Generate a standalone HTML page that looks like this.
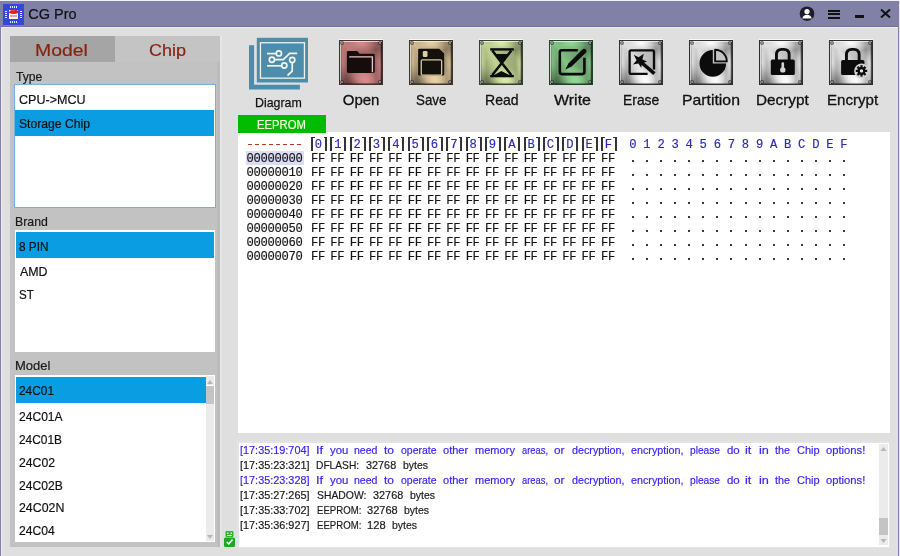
<!DOCTYPE html>
<html><head><meta charset="utf-8"><style>
html,body{margin:0;padding:0;}
body{width:900px;height:556px;position:relative;overflow:hidden;background:#e1e1e1;font-family:"Liberation Sans",sans-serif;}
.t{position:absolute;white-space:pre;line-height:1;transform-origin:0 0;}
.r{position:absolute;}
.btn{position:absolute;top:40px;width:42px;height:43px;border:1px solid #333;box-sizing:content-box;box-shadow:0 -1px 0 #f8f8f8;overflow:hidden;}
.plate{position:absolute;left:0;top:0;right:0;bottom:0;background:
 radial-gradient(ellipse 55% 20% at 50% 5%, rgba(255,255,255,1) 0%, rgba(255,255,255,0) 100%),
 radial-gradient(ellipse 38% 30% at 60% 90%, rgba(255,255,255,0.95) 0%, rgba(255,255,255,0) 100%),
 linear-gradient(60deg, rgba(255,255,255,0) 25%, rgba(255,255,255,0.55) 42%, rgba(255,255,255,0) 58%),
 radial-gradient(ellipse 75% 75% at 50% 50%, rgba(0,0,0,0) 50%, rgba(0,0,0,0.35) 100%),
 linear-gradient(45deg, rgba(0,0,0,0.3) 0%, rgba(0,0,0,0) 28%, rgba(0,0,0,0) 72%, rgba(0,0,0,0.35) 100%),
 linear-gradient(90deg, #747474 0%, #eeeeee 5%, #b4b4b4 15%, #c4c4c4 50%, #b4b4b4 85%, #eeeeee 95%, #6e6e6e 100%);}
.tint{position:absolute;left:0;top:0;right:0;bottom:0;mix-blend-mode:multiply;}
.bev{position:absolute;left:0;top:0;right:0;bottom:0;box-shadow:inset 1px 1px 0 rgba(255,255,255,0.7), inset -1px -1px 0 rgba(0,0,0,0.35);}
.scr{position:absolute;width:2px;height:2px;border-radius:50%;background:#9a9a9a;box-shadow:0 0 0 1px rgba(30,30,30,0.6);}
.ico{position:absolute;left:-1px;top:-1px;}
.br{position:absolute;top:137px;width:4px;height:14px;border-left:2px solid #333;border-top:1.5px solid #333;box-sizing:border-box;}
.br2{position:absolute;top:137px;width:3.5px;height:14px;border-right:2px solid #333;border-top:1.5px solid #333;box-sizing:border-box;}
</style></head><body>
<div class="r" style="left:0px;top:0px;width:900px;height:556px;background:#dfdfdf;"></div>
<div class="r" style="left:0px;top:0px;width:900px;height:1px;background:#f2f2f2;"></div>
<div class="r" style="left:0px;top:1px;width:899px;height:25px;background:#8180a6;"></div>
<div class="r" style="left:1px;top:26px;width:897px;height:1px;background:#7370a0;"></div>
<div class="r" style="left:1px;top:27px;width:897px;height:1px;background:#ececec;"></div>
<div class="r" style="left:1px;top:27px;width:1px;height:529px;background:#ececec;"></div>
<div class="r" style="left:0px;top:26px;width:1px;height:530px;background:#8180a6;"></div>
<div class="r" style="left:898px;top:26px;width:1px;height:530px;background:#8180a6;"></div>
<div class="r" style="left:899px;top:0px;width:1px;height:556px;background:#e6e6e6;"></div>
<svg class="r" style="left:3px;top:4px" width="21" height="21" viewBox="0 0 21 21">
<rect x="0" y="0" width="21" height="21" fill="#3547d8"/>
<g fill="#e8ecff">
<rect x="9" y="2" width="1" height="2"/><rect x="11" y="2" width="1" height="2"/><rect x="13" y="2" width="1" height="2"/><rect x="7" y="2" width="1" height="2"/>
<rect x="7" y="17" width="1" height="2"/><rect x="9" y="17" width="1" height="2"/><rect x="11" y="17" width="1" height="2"/><rect x="13" y="17" width="1" height="2"/>
<rect x="2" y="7" width="2" height="1"/><rect x="2" y="9" width="2" height="1"/><rect x="2" y="11" width="2" height="1"/><rect x="2" y="13" width="2" height="1"/>
<rect x="17" y="7" width="2" height="1"/><rect x="17" y="9" width="2" height="1"/><rect x="17" y="11" width="2" height="1"/><rect x="17" y="13" width="2" height="1"/>
</g>
<rect x="6" y="6" width="9" height="9" fill="#f4f0f4"/>
<path d="M6 8 Q8 5 11 6.5 Q13 5 15 7 L15 9 Q11 11 6 9 Z" fill="#e02020"/>
<rect x="7" y="11" width="7" height="2" fill="#e8a0b0"/>
</svg>
<div class="t" style="left:28.28px;top:7.00px;font-size:14.50px;color:#111;font-family:'Liberation Sans', sans-serif;-webkit-text-stroke:0.20px #111;">CG Pro</div>
<svg class="r" style="left:799px;top:6px" width="16" height="16" viewBox="0 0 16 16">
<circle cx="8" cy="7.7" r="7.3" fill="#1c1c2c"/>
<circle cx="8" cy="5.6" r="2.6" fill="#fff"/>
<path d="M3.3 12.4 Q4.2 8.8 8 8.8 Q11.8 8.8 12.7 12.4 Z" fill="#fff"/>
</svg>
<div class="r" style="left:828px;top:10px;width:12px;height:2px;background:#111;"></div>
<div class="r" style="left:828px;top:13px;width:12px;height:2px;background:#111;"></div>
<div class="r" style="left:828px;top:17px;width:12px;height:2px;background:#111;"></div>
<div class="r" style="left:855px;top:15px;width:9px;height:3px;background:#111;"></div>
<svg class="r" style="left:880px;top:9px" width="11" height="9" viewBox="0 0 11 9">
<path d="M1 0.5 L10 8.5 M10 0.5 L1 8.5" stroke="#111" stroke-width="2"/>
</svg>
<div class="r" style="left:10px;top:36px;width:210px;height:511px;background:#c2c2c2;"></div>
<div class="r" style="left:217px;top:62px;width:3px;height:485px;background:#bcbcbc;"></div>
<div class="r" style="left:220px;top:36px;width:2px;height:511px;background:#e6e6e6;"></div>
<div class="r" style="left:10px;top:36px;width:105px;height:26px;background:#a5a5a5;"></div>
<div class="r" style="left:115px;top:36px;width:105px;height:26px;background:#c4c4c4;"></div>
<div class="t" style="left:35.45px;top:42.00px;font-size:17.40px;color:#8a2212;font-family:'Liberation Sans', sans-serif;transform:scaleX(1.1159);-webkit-text-stroke:0.20px #8a2212;">Model</div>
<div class="t" style="left:148.60px;top:42.00px;font-size:17.40px;color:#8a2212;font-family:'Liberation Sans', sans-serif;transform:scaleX(1.0383);-webkit-text-stroke:0.20px #8a2212;">Chip</div>
<div class="t" style="left:16.06px;top:71.00px;font-size:12.80px;color:#1a1a1a;font-family:'Liberation Sans', sans-serif;transform:scaleX(0.9487);-webkit-text-stroke:0.20px #1a1a1a;">Type</div>
<div class="r" style="left:14px;top:84px;width:202px;height:124px;background:#72aee8;"></div>
<div class="r" style="left:15px;top:85px;width:200px;height:122px;background:#fff;"></div>
<div class="r" style="left:15px;top:110px;width:199px;height:26px;background:#0a9de2;"></div>
<div class="t" style="left:18.87px;top:94.00px;font-size:12.80px;color:#111;font-family:'Liberation Sans', sans-serif;transform:scaleX(0.9803);-webkit-text-stroke:0.20px #111;">CPU-&gt;MCU</div>
<div class="t" style="left:18.95px;top:118.00px;font-size:12.80px;color:#111;font-family:'Liberation Sans', sans-serif;transform:scaleX(0.9511);-webkit-text-stroke:0.20px #111;">Storage Chip</div>
<div class="t" style="left:15.32px;top:216.00px;font-size:12.80px;color:#1a1a1a;font-family:'Liberation Sans', sans-serif;transform:scaleX(0.9611);-webkit-text-stroke:0.20px #1a1a1a;">Brand</div>
<div class="r" style="left:15px;top:230px;width:200px;height:122px;background:#ffffff;"></div>
<div class="r" style="left:16px;top:232px;width:198px;height:26px;background:#0a9de2;"></div>
<div class="t" style="left:19.07px;top:241.00px;font-size:12.80px;color:#111;font-family:'Liberation Sans', sans-serif;transform:scaleX(0.9211);-webkit-text-stroke:0.20px #111;">8 PIN</div>
<div class="t" style="left:19.60px;top:266.00px;font-size:12.80px;color:#111;font-family:'Liberation Sans', sans-serif;transform:scaleX(0.9698);-webkit-text-stroke:0.20px #111;">AMD</div>
<div class="t" style="left:19.08px;top:289.00px;font-size:12.80px;color:#111;font-family:'Liberation Sans', sans-serif;transform:scaleX(0.9039);-webkit-text-stroke:0.20px #111;">ST</div>
<div class="t" style="left:15.46px;top:360.00px;font-size:12.80px;color:#1a1a1a;font-family:'Liberation Sans', sans-serif;transform:scaleX(1.0164);-webkit-text-stroke:0.20px #1a1a1a;">Model</div>
<div class="r" style="left:15px;top:375px;width:200px;height:167px;background:#ffffff;"></div>
<div class="r" style="left:16px;top:377px;width:190px;height:26px;background:#0a9de2;"></div>
<div class="r" style="left:206px;top:376px;width:8px;height:165px;background:#ebebeb;"></div>
<div class="r" style="left:206px;top:386px;width:8px;height:18px;background:#c4c4c4;"></div>
<div class="r" style="left:206px;top:385px;width:8px;height:1px;background:#ffffff;"></div>
<div class="t" style="left:19.11px;top:384.00px;font-size:13.00px;color:#111;font-family:'Liberation Sans', sans-serif;transform:scaleX(0.9150);-webkit-text-stroke:0.20px #111;">24C01</div>
<div class="t" style="left:19.10px;top:410.00px;font-size:13.00px;color:#111;font-family:'Liberation Sans', sans-serif;transform:scaleX(0.9291);-webkit-text-stroke:0.20px #111;">24C01A</div>
<div class="t" style="left:19.11px;top:433.00px;font-size:13.00px;color:#111;font-family:'Liberation Sans', sans-serif;transform:scaleX(0.9139);-webkit-text-stroke:0.20px #111;">24C01B</div>
<div class="t" style="left:19.09px;top:456.00px;font-size:13.00px;color:#111;font-family:'Liberation Sans', sans-serif;transform:scaleX(0.9409);-webkit-text-stroke:0.20px #111;">24C02</div>
<div class="t" style="left:19.09px;top:479.00px;font-size:13.00px;color:#111;font-family:'Liberation Sans', sans-serif;transform:scaleX(0.9314);-webkit-text-stroke:0.20px #111;">24C02B</div>
<div class="t" style="left:19.08px;top:501.00px;font-size:13.00px;color:#111;font-family:'Liberation Sans', sans-serif;transform:scaleX(0.9509);-webkit-text-stroke:0.20px #111;">24C02N</div>
<div class="t" style="left:19.09px;top:524.00px;font-size:13.00px;color:#111;font-family:'Liberation Sans', sans-serif;transform:scaleX(0.9344);-webkit-text-stroke:0.20px #111;">24C04</div>
<svg class="r" style="left:206px;top:377px" width="8" height="9"><path d="M1 7 L4 3 L7 7 Z" fill="#b6b6b6"/></svg>
<svg class="r" style="left:206px;top:532px" width="8" height="9"><path d="M1 3 L4 7 L7 3 Z" fill="#b6b6b6"/></svg>
<svg class="r" style="left:224px;top:531px" width="11" height="16" viewBox="0 0 11 16">
<rect x="1.5" y="0" width="8" height="6" rx="1" fill="#2db52d"/>
<rect x="3" y="1.5" width="1.5" height="1.5" fill="#dff5df"/><rect x="6.5" y="1.5" width="1.5" height="1.5" fill="#dff5df"/>
<rect x="3" y="4" width="5" height="1" fill="#dff5df"/>
<rect x="0" y="6.5" width="11" height="9.5" rx="1.5" fill="#1ea81e"/>
<path d="M2.8 11 L4.8 13 L8.5 8.5" stroke="#fff" stroke-width="1.5" fill="none"/>
</svg>
<svg class="r" style="left:246px;top:34px" width="66" height="60" viewBox="0 0 66 60">
<path d="M3 11.3 L8.1 11.3 L8.1 50.7 L53.9 50.7 L53.9 55.6 L3 55.6 Z" fill="#4d8dac"/>
<rect x="10.8" y="3.8" width="51.2" height="44.7" fill="#4d8dac"/>
<rect x="14.45" y="8.75" width="44" height="35.4" fill="none" stroke="#eef2ee" stroke-width="1.3"/>
<g stroke="#f2f4ee" stroke-width="1.7" fill="none">
<path d="M21 19.6 L30.2 19.6"/><circle cx="32.9" cy="19.4" r="2.6"/>
<circle cx="25.9" cy="25.7" r="2.6"/><path d="M28.5 25.7 L37.2 25.7 L43.7 19.4 L51.2 19.4"/>
<path d="M21 31.8 L35.6 31.8"/><circle cx="38.3" cy="31.5" r="2.6"/>
<circle cx="46.2" cy="25.9" r="2.6"/><path d="M46.2 28.5 L46.2 37.2 L41.5 41.5"/>
</g>
</svg>
<div class="t" style="left:255.01px;top:96.00px;font-size:13.50px;color:#111;font-family:'Liberation Sans', sans-serif;transform:scaleX(0.9170);-webkit-text-stroke:0.25px #111;">Diagram</div>
<div class="btn" style="left:339px;border-color:#4a2c2c">
<div class="plate"></div>
<div class="tint" style="background:#dc8c8c"></div>
<div class="bev" style="border-color:#4a2c2c"></div>
<div class="scr" style="left:1.0px;top:1.2px"></div>
<div class="scr" style="left:38.6px;top:1.2px"></div>
<div class="scr" style="left:1.0px;top:39.5px"></div>
<div class="scr" style="left:38.6px;top:39.5px"></div>
<svg class="ico" width="44" height="45" viewBox="0 0 44 45"><path d="M9.2 10.9 L17.6 10.9 Q18.3 10.9 18.8 11.5 L20.6 13.8 L34.4 13.8 Q35.8 13.8 35.8 15.2 L35.8 31.6 Q35.8 33 34.4 33 L9.3 33 Q7.9 33 7.9 31.6 L7.9 12.2 Q7.9 10.9 9.2 10.9 Z" fill="#160c0c"/><path d="M10.2 16.9 L33.4 16.9 L33.4 32.3" stroke="#e4c4c4" stroke-width="1.4" fill="none"/></svg>
</div>
<div class="t" style="left:342.73px;top:92.00px;font-size:15.00px;color:#111;font-family:'Liberation Sans', sans-serif;-webkit-text-stroke:0.3px #111;">Open</div>
<div class="btn" style="left:409px;border-color:#3e3422">
<div class="plate"></div>
<div class="tint" style="background:#ecd4a6"></div>
<div class="bev" style="border-color:#3e3422"></div>
<div class="scr" style="left:1.0px;top:1.2px"></div>
<div class="scr" style="left:38.6px;top:1.2px"></div>
<div class="scr" style="left:1.0px;top:39.5px"></div>
<div class="scr" style="left:38.6px;top:39.5px"></div>
<svg class="ico" width="44" height="45" viewBox="0 0 44 45"><path d="M10.3 8.8 L30.2 8.8 L35.2 13.4 L35.2 34.3 Q35.2 35.5 34 35.5 L10.3 35.5 Q9.1 35.5 9.1 34.3 L9.1 10 Q9.1 8.8 10.3 8.8 Z" fill="#14100a"/><rect x="13.8" y="11" width="4.7" height="6" rx="1.2" fill="#dccca8"/><rect x="12.25" y="19.85" width="20.4" height="15.2" rx="1" fill="none" stroke="#d8c8a4" stroke-width="1.3"/></svg>
</div>
<div class="t" style="left:416.20px;top:92.00px;font-size:15.00px;color:#111;font-family:'Liberation Sans', sans-serif;transform:scaleX(0.8919);-webkit-text-stroke:0.3px #111;">Save</div>
<div class="btn" style="left:479px;border-color:#36402c">
<div class="plate"></div>
<div class="tint" style="background:#dcf0a8"></div>
<div class="bev" style="border-color:#36402c"></div>
<div class="scr" style="left:1.0px;top:1.2px"></div>
<div class="scr" style="left:38.6px;top:1.2px"></div>
<div class="scr" style="left:1.0px;top:39.5px"></div>
<div class="scr" style="left:38.6px;top:39.5px"></div>
<svg class="ico" width="44" height="45" viewBox="0 0 44 45"><rect x="11.2" y="8.2" width="23.6" height="2.4" fill="#0c0c0c"/><rect x="11.2" y="34.9" width="23.6" height="2.4" fill="#0c0c0c"/><path d="M13.3 10.5 L22.8 23 L13.3 35 M32.3 10.5 L22.8 23 L32.3 35" stroke="#0c0c0c" stroke-width="2.5" fill="none"/><path d="M16.2 14.1 L29.4 14.1 L22.8 23 Z" fill="#0c0c0c"/><path d="M15.3 35.1 L22.3 31 L30.3 35.1 Z" fill="#0c0c0c"/></svg>
</div>
<div class="t" style="left:484.58px;top:92.00px;font-size:15.00px;color:#111;font-family:'Liberation Sans', sans-serif;transform:scaleX(0.9354);-webkit-text-stroke:0.3px #111;">Read</div>
<div class="btn" style="left:549px;border-color:#1e4424">
<div class="plate"></div>
<div class="tint" style="background:#94dc96"></div>
<div class="bev" style="border-color:#1e4424"></div>
<div class="scr" style="left:1.0px;top:1.2px"></div>
<div class="scr" style="left:38.6px;top:1.2px"></div>
<div class="scr" style="left:1.0px;top:39.5px"></div>
<div class="scr" style="left:38.6px;top:39.5px"></div>
<svg class="ico" width="44" height="45" viewBox="0 0 44 45"><path d="M28.8 10.2 L12.8 10.2 Q10.8 10.2 10.8 12.2 L10.8 32.1 Q10.8 34.1 12.8 34.1 L33.4 34.1 Q35.4 34.1 35.4 32.1 L35.4 17.8" stroke="#0c0c0c" stroke-width="2.6" fill="none"/><path d="M16.3 29.6 L19.4 23.4 L33.4 9.4 Q35.1 7.9 36.8 9.5 Q38.3 11.1 36.8 12.8 L22.6 26.6 Z" fill="#0c0c0c"/></svg>
</div>
<div class="t" style="left:553.72px;top:92.00px;font-size:15.00px;color:#111;font-family:'Liberation Sans', sans-serif;transform:scaleX(1.0655);-webkit-text-stroke:0.3px #111;">Write</div>
<div class="btn" style="left:619px;border-color:#2e2e2e">
<div class="plate"></div>
<div class="bev" style="border-color:#2e2e2e"></div>
<div class="scr" style="left:1.0px;top:1.2px"></div>
<div class="scr" style="left:38.6px;top:1.2px"></div>
<div class="scr" style="left:1.0px;top:39.5px"></div>
<div class="scr" style="left:38.6px;top:39.5px"></div>
<svg class="ico" width="44" height="45" viewBox="0 0 44 45"><path d="M28.6 33.9 L12 33.9 Q10.6 33.9 10.6 32.5 L10.6 11.7 Q10.6 10.3 12 10.3 L33.6 10.3 Q35 10.3 35 11.7 L35 29.6" stroke="#0c0c0c" stroke-width="2.3" fill="none"/><path d="M23 23 L35.4 33.6" stroke="#0c0c0c" stroke-width="3.6"/><path d="M14.7 14.7 L19.6 17.3 L24.8 13.7 L23.4 19.6 L28 21.5 L23 23.4 L22.2 27.7 L19.4 23.4 L14 24.4 L17.6 20.2 Z" fill="#0c0c0c"/></svg>
</div>
<div class="t" style="left:623.29px;top:92.00px;font-size:15.00px;color:#111;font-family:'Liberation Sans', sans-serif;transform:scaleX(0.9256);-webkit-text-stroke:0.3px #111;">Erase</div>
<div class="btn" style="left:689px;border-color:#2e2e2e">
<div class="plate"></div>
<div class="bev" style="border-color:#2e2e2e"></div>
<div class="scr" style="left:1.0px;top:1.2px"></div>
<div class="scr" style="left:38.6px;top:1.2px"></div>
<div class="scr" style="left:1.0px;top:39.5px"></div>
<div class="scr" style="left:38.6px;top:39.5px"></div>
<svg class="ico" width="44" height="45" viewBox="0 0 44 45"><path d="M23.8 23.4 L23.8 10.1 A13.3 13.3 0 1 0 37.1 23.4 Z" fill="#0c0c0c"/><path d="M26.1 21.4 L26.1 9.7 A11.7 11.7 0 0 1 37.8 21.4 Z" fill="#c4c4c4" stroke="#0c0c0c" stroke-width="1.9" stroke-linejoin="round"/></svg>
</div>
<div class="t" style="left:682.04px;top:92.00px;font-size:15.00px;color:#111;font-family:'Liberation Sans', sans-serif;transform:scaleX(1.0530);-webkit-text-stroke:0.3px #111;">Partition</div>
<div class="btn" style="left:759px;border-color:#2e2e2e">
<div class="plate"></div>
<div class="bev" style="border-color:#2e2e2e"></div>
<div class="scr" style="left:1.0px;top:1.2px"></div>
<div class="scr" style="left:38.6px;top:1.2px"></div>
<div class="scr" style="left:1.0px;top:39.5px"></div>
<div class="scr" style="left:38.6px;top:39.5px"></div>
<svg class="ico" width="44" height="45" viewBox="0 0 44 45"><path d="M17.45 20.5 L17.45 14.6 Q17.45 9.35 22.7 9.35 L24.9 9.35 Q30.15 9.35 30.15 14.6 L30.15 20.5" stroke="#0c0c0c" stroke-width="2.9" fill="none"/><rect x="11.8" y="19.6" width="24" height="15.5" rx="1.6" fill="#0c0c0c"/><rect x="22.5" y="22.2" width="2.6" height="7.5" rx="1.2" fill="#d4d4d4"/><circle cx="23.8" cy="29.9" r="2.7" fill="#d4d4d4"/></svg>
</div>
<div class="t" style="left:755.67px;top:92.00px;font-size:15.00px;color:#111;font-family:'Liberation Sans', sans-serif;transform:scaleX(1.0218);-webkit-text-stroke:0.3px #111;">Decrypt</div>
<div class="btn" style="left:829px;border-color:#2e2e2e">
<div class="plate"></div>
<div class="bev" style="border-color:#2e2e2e"></div>
<div class="scr" style="left:1.0px;top:1.2px"></div>
<div class="scr" style="left:38.6px;top:1.2px"></div>
<div class="scr" style="left:1.0px;top:39.5px"></div>
<div class="scr" style="left:38.6px;top:39.5px"></div>
<svg class="ico" width="44" height="45" viewBox="0 0 44 45"><path d="M17.45 20.5 L17.45 14.6 Q17.45 9.35 22.7 9.35 L24.9 9.35 Q30.15 9.35 30.15 14.6 L30.15 20.5" stroke="#0c0c0c" stroke-width="2.9" fill="none"/><rect x="12.1" y="19.9" width="23.3" height="15.2" rx="1.6" fill="#0c0c0c"/><circle cx="32.5" cy="30.9" r="7.4" fill="#d2d2d2"/><g transform="translate(32.5 30.9)" fill="#0c0c0c"><circle r="3.9"/><rect x="-1.1" y="-5.7" width="2.2" height="11.4"/><rect x="-5.7" y="-1.1" width="11.4" height="2.2"/><rect x="-1.1" y="-5.7" width="2.2" height="11.4" transform="rotate(45)"/><rect x="-1.1" y="-5.7" width="2.2" height="11.4" transform="rotate(-45)"/><circle r="1.7" fill="#e4e4e4"/></g></svg>
</div>
<div class="t" style="left:826.79px;top:92.00px;font-size:15.00px;color:#111;font-family:'Liberation Sans', sans-serif;transform:scaleX(1.0061);-webkit-text-stroke:0.3px #111;">Encrypt</div>
<div class="r" style="left:238px;top:132px;width:652px;height:301px;background:#ffffff;"></div>
<div class="r" style="left:238px;top:115px;width:88px;height:18px;background:#00bb00;"></div>
<div class="t" style="left:257.10px;top:119.00px;font-size:12.50px;color:#f4ffe0;font-family:'Liberation Sans', sans-serif;transform:scaleX(0.9017);-webkit-text-stroke:0.20px #f4ffe0;">EEPROM</div>
<div class="r" style="left:248.20px;top:144px;width:3.6px;height:1.3px;background:#b03a2a"></div>
<div class="r" style="left:255.23px;top:144px;width:3.6px;height:1.3px;background:#b03a2a"></div>
<div class="r" style="left:262.26px;top:144px;width:3.6px;height:1.3px;background:#b03a2a"></div>
<div class="r" style="left:269.29px;top:144px;width:3.6px;height:1.3px;background:#b03a2a"></div>
<div class="r" style="left:276.32px;top:144px;width:3.6px;height:1.3px;background:#b03a2a"></div>
<div class="r" style="left:283.35px;top:144px;width:3.6px;height:1.3px;background:#b03a2a"></div>
<div class="r" style="left:290.38px;top:144px;width:3.6px;height:1.3px;background:#b03a2a"></div>
<div class="r" style="left:297.41px;top:144px;width:3.6px;height:1.3px;background:#b03a2a"></div>
<div class="br" style="left:311.00px"></div>
<div class="br2" style="left:323.50px"></div>
<div class="t" style="left:314.85px;top:139px;font-size:12.2px;font-family:'Liberation Mono', monospace;letter-spacing:-0.32px;color:#2a2ab4;-webkit-text-stroke:0.15px currentColor;">0</div>
<div class="br" style="left:330.33px"></div>
<div class="br2" style="left:342.83px"></div>
<div class="t" style="left:334.18px;top:139px;font-size:12.2px;font-family:'Liberation Mono', monospace;letter-spacing:-0.32px;color:#2a2ab4;-webkit-text-stroke:0.15px currentColor;">1</div>
<div class="br" style="left:349.66px"></div>
<div class="br2" style="left:362.16px"></div>
<div class="t" style="left:353.51px;top:139px;font-size:12.2px;font-family:'Liberation Mono', monospace;letter-spacing:-0.32px;color:#2a2ab4;-webkit-text-stroke:0.15px currentColor;">2</div>
<div class="br" style="left:368.99px"></div>
<div class="br2" style="left:381.49px"></div>
<div class="t" style="left:372.84px;top:139px;font-size:12.2px;font-family:'Liberation Mono', monospace;letter-spacing:-0.32px;color:#2a2ab4;-webkit-text-stroke:0.15px currentColor;">3</div>
<div class="br" style="left:388.32px"></div>
<div class="br2" style="left:400.82px"></div>
<div class="t" style="left:392.17px;top:139px;font-size:12.2px;font-family:'Liberation Mono', monospace;letter-spacing:-0.32px;color:#2a2ab4;-webkit-text-stroke:0.15px currentColor;">4</div>
<div class="br" style="left:407.65px"></div>
<div class="br2" style="left:420.15px"></div>
<div class="t" style="left:411.50px;top:139px;font-size:12.2px;font-family:'Liberation Mono', monospace;letter-spacing:-0.32px;color:#2a2ab4;-webkit-text-stroke:0.15px currentColor;">5</div>
<div class="br" style="left:426.98px"></div>
<div class="br2" style="left:439.48px"></div>
<div class="t" style="left:430.83px;top:139px;font-size:12.2px;font-family:'Liberation Mono', monospace;letter-spacing:-0.32px;color:#2a2ab4;-webkit-text-stroke:0.15px currentColor;">6</div>
<div class="br" style="left:446.31px"></div>
<div class="br2" style="left:458.81px"></div>
<div class="t" style="left:450.16px;top:139px;font-size:12.2px;font-family:'Liberation Mono', monospace;letter-spacing:-0.32px;color:#2a2ab4;-webkit-text-stroke:0.15px currentColor;">7</div>
<div class="br" style="left:465.64px"></div>
<div class="br2" style="left:478.14px"></div>
<div class="t" style="left:469.49px;top:139px;font-size:12.2px;font-family:'Liberation Mono', monospace;letter-spacing:-0.32px;color:#2a2ab4;-webkit-text-stroke:0.15px currentColor;">8</div>
<div class="br" style="left:484.97px"></div>
<div class="br2" style="left:497.47px"></div>
<div class="t" style="left:488.82px;top:139px;font-size:12.2px;font-family:'Liberation Mono', monospace;letter-spacing:-0.32px;color:#2a2ab4;-webkit-text-stroke:0.15px currentColor;">9</div>
<div class="br" style="left:504.30px"></div>
<div class="br2" style="left:516.80px"></div>
<div class="t" style="left:508.15px;top:139px;font-size:12.2px;font-family:'Liberation Mono', monospace;letter-spacing:-0.32px;color:#2a2ab4;-webkit-text-stroke:0.15px currentColor;">A</div>
<div class="br" style="left:523.63px"></div>
<div class="br2" style="left:536.13px"></div>
<div class="t" style="left:527.48px;top:139px;font-size:12.2px;font-family:'Liberation Mono', monospace;letter-spacing:-0.32px;color:#2a2ab4;-webkit-text-stroke:0.15px currentColor;">B</div>
<div class="br" style="left:542.96px"></div>
<div class="br2" style="left:555.46px"></div>
<div class="t" style="left:546.81px;top:139px;font-size:12.2px;font-family:'Liberation Mono', monospace;letter-spacing:-0.32px;color:#2a2ab4;-webkit-text-stroke:0.15px currentColor;">C</div>
<div class="br" style="left:562.29px"></div>
<div class="br2" style="left:574.79px"></div>
<div class="t" style="left:566.14px;top:139px;font-size:12.2px;font-family:'Liberation Mono', monospace;letter-spacing:-0.32px;color:#2a2ab4;-webkit-text-stroke:0.15px currentColor;">D</div>
<div class="br" style="left:581.62px"></div>
<div class="br2" style="left:594.12px"></div>
<div class="t" style="left:585.47px;top:139px;font-size:12.2px;font-family:'Liberation Mono', monospace;letter-spacing:-0.32px;color:#2a2ab4;-webkit-text-stroke:0.15px currentColor;">E</div>
<div class="br" style="left:600.95px"></div>
<div class="br2" style="left:613.45px"></div>
<div class="t" style="left:604.80px;top:139px;font-size:12.2px;font-family:'Liberation Mono', monospace;letter-spacing:-0.32px;color:#2a2ab4;-webkit-text-stroke:0.15px currentColor;">F</div>
<div class="r" style="left:246px;top:151px;width:58px;height:14px;background:#dcdcf7;"></div>
<div class="t" style="left:246.55px;top:153px;font-size:12.2px;font-family:'Liberation Mono', monospace;letter-spacing:-0.32px;color:#141414;-webkit-text-stroke:0.15px currentColor;">00000000</div>
<div class="t" style="left:311.00px;top:153px;font-size:12.2px;font-family:'Liberation Mono', monospace;letter-spacing:-0.32px;color:#141414;-webkit-text-stroke:0.15px currentColor;">FF</div>
<div class="t" style="left:330.33px;top:153px;font-size:12.2px;font-family:'Liberation Mono', monospace;letter-spacing:-0.32px;color:#141414;-webkit-text-stroke:0.15px currentColor;">FF</div>
<div class="t" style="left:349.66px;top:153px;font-size:12.2px;font-family:'Liberation Mono', monospace;letter-spacing:-0.32px;color:#141414;-webkit-text-stroke:0.15px currentColor;">FF</div>
<div class="t" style="left:368.99px;top:153px;font-size:12.2px;font-family:'Liberation Mono', monospace;letter-spacing:-0.32px;color:#141414;-webkit-text-stroke:0.15px currentColor;">FF</div>
<div class="t" style="left:388.32px;top:153px;font-size:12.2px;font-family:'Liberation Mono', monospace;letter-spacing:-0.32px;color:#141414;-webkit-text-stroke:0.15px currentColor;">FF</div>
<div class="t" style="left:407.65px;top:153px;font-size:12.2px;font-family:'Liberation Mono', monospace;letter-spacing:-0.32px;color:#141414;-webkit-text-stroke:0.15px currentColor;">FF</div>
<div class="t" style="left:426.98px;top:153px;font-size:12.2px;font-family:'Liberation Mono', monospace;letter-spacing:-0.32px;color:#141414;-webkit-text-stroke:0.15px currentColor;">FF</div>
<div class="t" style="left:446.31px;top:153px;font-size:12.2px;font-family:'Liberation Mono', monospace;letter-spacing:-0.32px;color:#141414;-webkit-text-stroke:0.15px currentColor;">FF</div>
<div class="t" style="left:465.64px;top:153px;font-size:12.2px;font-family:'Liberation Mono', monospace;letter-spacing:-0.32px;color:#141414;-webkit-text-stroke:0.15px currentColor;">FF</div>
<div class="t" style="left:484.97px;top:153px;font-size:12.2px;font-family:'Liberation Mono', monospace;letter-spacing:-0.32px;color:#141414;-webkit-text-stroke:0.15px currentColor;">FF</div>
<div class="t" style="left:504.30px;top:153px;font-size:12.2px;font-family:'Liberation Mono', monospace;letter-spacing:-0.32px;color:#141414;-webkit-text-stroke:0.15px currentColor;">FF</div>
<div class="t" style="left:523.63px;top:153px;font-size:12.2px;font-family:'Liberation Mono', monospace;letter-spacing:-0.32px;color:#141414;-webkit-text-stroke:0.15px currentColor;">FF</div>
<div class="t" style="left:542.96px;top:153px;font-size:12.2px;font-family:'Liberation Mono', monospace;letter-spacing:-0.32px;color:#141414;-webkit-text-stroke:0.15px currentColor;">FF</div>
<div class="t" style="left:562.29px;top:153px;font-size:12.2px;font-family:'Liberation Mono', monospace;letter-spacing:-0.32px;color:#141414;-webkit-text-stroke:0.15px currentColor;">FF</div>
<div class="t" style="left:581.62px;top:153px;font-size:12.2px;font-family:'Liberation Mono', monospace;letter-spacing:-0.32px;color:#141414;-webkit-text-stroke:0.15px currentColor;">FF</div>
<div class="t" style="left:600.95px;top:153px;font-size:12.2px;font-family:'Liberation Mono', monospace;letter-spacing:-0.32px;color:#141414;-webkit-text-stroke:0.15px currentColor;">FF</div>
<div class="r" style="left:632px;top:160px;width:2px;height:2px;background:#3a3a3a;"></div>
<div class="r" style="left:646px;top:160px;width:2px;height:2px;background:#3a3a3a;"></div>
<div class="r" style="left:660px;top:160px;width:2px;height:2px;background:#3a3a3a;"></div>
<div class="r" style="left:674px;top:160px;width:2px;height:2px;background:#3a3a3a;"></div>
<div class="r" style="left:688px;top:160px;width:2px;height:2px;background:#3a3a3a;"></div>
<div class="r" style="left:702px;top:160px;width:2px;height:2px;background:#3a3a3a;"></div>
<div class="r" style="left:716px;top:160px;width:2px;height:2px;background:#3a3a3a;"></div>
<div class="r" style="left:730px;top:160px;width:2px;height:2px;background:#3a3a3a;"></div>
<div class="r" style="left:745px;top:160px;width:2px;height:2px;background:#3a3a3a;"></div>
<div class="r" style="left:759px;top:160px;width:2px;height:2px;background:#3a3a3a;"></div>
<div class="r" style="left:773px;top:160px;width:2px;height:2px;background:#3a3a3a;"></div>
<div class="r" style="left:787px;top:160px;width:2px;height:2px;background:#3a3a3a;"></div>
<div class="r" style="left:801px;top:160px;width:2px;height:2px;background:#3a3a3a;"></div>
<div class="r" style="left:815px;top:160px;width:2px;height:2px;background:#3a3a3a;"></div>
<div class="r" style="left:829px;top:160px;width:2px;height:2px;background:#3a3a3a;"></div>
<div class="r" style="left:843px;top:160px;width:2px;height:2px;background:#3a3a3a;"></div>
<div class="t" style="left:246.55px;top:167px;font-size:12.2px;font-family:'Liberation Mono', monospace;letter-spacing:-0.32px;color:#141414;-webkit-text-stroke:0.15px currentColor;">00000010</div>
<div class="t" style="left:311.00px;top:167px;font-size:12.2px;font-family:'Liberation Mono', monospace;letter-spacing:-0.32px;color:#141414;-webkit-text-stroke:0.15px currentColor;">FF</div>
<div class="t" style="left:330.33px;top:167px;font-size:12.2px;font-family:'Liberation Mono', monospace;letter-spacing:-0.32px;color:#141414;-webkit-text-stroke:0.15px currentColor;">FF</div>
<div class="t" style="left:349.66px;top:167px;font-size:12.2px;font-family:'Liberation Mono', monospace;letter-spacing:-0.32px;color:#141414;-webkit-text-stroke:0.15px currentColor;">FF</div>
<div class="t" style="left:368.99px;top:167px;font-size:12.2px;font-family:'Liberation Mono', monospace;letter-spacing:-0.32px;color:#141414;-webkit-text-stroke:0.15px currentColor;">FF</div>
<div class="t" style="left:388.32px;top:167px;font-size:12.2px;font-family:'Liberation Mono', monospace;letter-spacing:-0.32px;color:#141414;-webkit-text-stroke:0.15px currentColor;">FF</div>
<div class="t" style="left:407.65px;top:167px;font-size:12.2px;font-family:'Liberation Mono', monospace;letter-spacing:-0.32px;color:#141414;-webkit-text-stroke:0.15px currentColor;">FF</div>
<div class="t" style="left:426.98px;top:167px;font-size:12.2px;font-family:'Liberation Mono', monospace;letter-spacing:-0.32px;color:#141414;-webkit-text-stroke:0.15px currentColor;">FF</div>
<div class="t" style="left:446.31px;top:167px;font-size:12.2px;font-family:'Liberation Mono', monospace;letter-spacing:-0.32px;color:#141414;-webkit-text-stroke:0.15px currentColor;">FF</div>
<div class="t" style="left:465.64px;top:167px;font-size:12.2px;font-family:'Liberation Mono', monospace;letter-spacing:-0.32px;color:#141414;-webkit-text-stroke:0.15px currentColor;">FF</div>
<div class="t" style="left:484.97px;top:167px;font-size:12.2px;font-family:'Liberation Mono', monospace;letter-spacing:-0.32px;color:#141414;-webkit-text-stroke:0.15px currentColor;">FF</div>
<div class="t" style="left:504.30px;top:167px;font-size:12.2px;font-family:'Liberation Mono', monospace;letter-spacing:-0.32px;color:#141414;-webkit-text-stroke:0.15px currentColor;">FF</div>
<div class="t" style="left:523.63px;top:167px;font-size:12.2px;font-family:'Liberation Mono', monospace;letter-spacing:-0.32px;color:#141414;-webkit-text-stroke:0.15px currentColor;">FF</div>
<div class="t" style="left:542.96px;top:167px;font-size:12.2px;font-family:'Liberation Mono', monospace;letter-spacing:-0.32px;color:#141414;-webkit-text-stroke:0.15px currentColor;">FF</div>
<div class="t" style="left:562.29px;top:167px;font-size:12.2px;font-family:'Liberation Mono', monospace;letter-spacing:-0.32px;color:#141414;-webkit-text-stroke:0.15px currentColor;">FF</div>
<div class="t" style="left:581.62px;top:167px;font-size:12.2px;font-family:'Liberation Mono', monospace;letter-spacing:-0.32px;color:#141414;-webkit-text-stroke:0.15px currentColor;">FF</div>
<div class="t" style="left:600.95px;top:167px;font-size:12.2px;font-family:'Liberation Mono', monospace;letter-spacing:-0.32px;color:#141414;-webkit-text-stroke:0.15px currentColor;">FF</div>
<div class="r" style="left:632px;top:174px;width:2px;height:2px;background:#3a3a3a;"></div>
<div class="r" style="left:646px;top:174px;width:2px;height:2px;background:#3a3a3a;"></div>
<div class="r" style="left:660px;top:174px;width:2px;height:2px;background:#3a3a3a;"></div>
<div class="r" style="left:674px;top:174px;width:2px;height:2px;background:#3a3a3a;"></div>
<div class="r" style="left:688px;top:174px;width:2px;height:2px;background:#3a3a3a;"></div>
<div class="r" style="left:702px;top:174px;width:2px;height:2px;background:#3a3a3a;"></div>
<div class="r" style="left:716px;top:174px;width:2px;height:2px;background:#3a3a3a;"></div>
<div class="r" style="left:730px;top:174px;width:2px;height:2px;background:#3a3a3a;"></div>
<div class="r" style="left:745px;top:174px;width:2px;height:2px;background:#3a3a3a;"></div>
<div class="r" style="left:759px;top:174px;width:2px;height:2px;background:#3a3a3a;"></div>
<div class="r" style="left:773px;top:174px;width:2px;height:2px;background:#3a3a3a;"></div>
<div class="r" style="left:787px;top:174px;width:2px;height:2px;background:#3a3a3a;"></div>
<div class="r" style="left:801px;top:174px;width:2px;height:2px;background:#3a3a3a;"></div>
<div class="r" style="left:815px;top:174px;width:2px;height:2px;background:#3a3a3a;"></div>
<div class="r" style="left:829px;top:174px;width:2px;height:2px;background:#3a3a3a;"></div>
<div class="r" style="left:843px;top:174px;width:2px;height:2px;background:#3a3a3a;"></div>
<div class="t" style="left:246.55px;top:181px;font-size:12.2px;font-family:'Liberation Mono', monospace;letter-spacing:-0.32px;color:#141414;-webkit-text-stroke:0.15px currentColor;">00000020</div>
<div class="t" style="left:311.00px;top:181px;font-size:12.2px;font-family:'Liberation Mono', monospace;letter-spacing:-0.32px;color:#141414;-webkit-text-stroke:0.15px currentColor;">FF</div>
<div class="t" style="left:330.33px;top:181px;font-size:12.2px;font-family:'Liberation Mono', monospace;letter-spacing:-0.32px;color:#141414;-webkit-text-stroke:0.15px currentColor;">FF</div>
<div class="t" style="left:349.66px;top:181px;font-size:12.2px;font-family:'Liberation Mono', monospace;letter-spacing:-0.32px;color:#141414;-webkit-text-stroke:0.15px currentColor;">FF</div>
<div class="t" style="left:368.99px;top:181px;font-size:12.2px;font-family:'Liberation Mono', monospace;letter-spacing:-0.32px;color:#141414;-webkit-text-stroke:0.15px currentColor;">FF</div>
<div class="t" style="left:388.32px;top:181px;font-size:12.2px;font-family:'Liberation Mono', monospace;letter-spacing:-0.32px;color:#141414;-webkit-text-stroke:0.15px currentColor;">FF</div>
<div class="t" style="left:407.65px;top:181px;font-size:12.2px;font-family:'Liberation Mono', monospace;letter-spacing:-0.32px;color:#141414;-webkit-text-stroke:0.15px currentColor;">FF</div>
<div class="t" style="left:426.98px;top:181px;font-size:12.2px;font-family:'Liberation Mono', monospace;letter-spacing:-0.32px;color:#141414;-webkit-text-stroke:0.15px currentColor;">FF</div>
<div class="t" style="left:446.31px;top:181px;font-size:12.2px;font-family:'Liberation Mono', monospace;letter-spacing:-0.32px;color:#141414;-webkit-text-stroke:0.15px currentColor;">FF</div>
<div class="t" style="left:465.64px;top:181px;font-size:12.2px;font-family:'Liberation Mono', monospace;letter-spacing:-0.32px;color:#141414;-webkit-text-stroke:0.15px currentColor;">FF</div>
<div class="t" style="left:484.97px;top:181px;font-size:12.2px;font-family:'Liberation Mono', monospace;letter-spacing:-0.32px;color:#141414;-webkit-text-stroke:0.15px currentColor;">FF</div>
<div class="t" style="left:504.30px;top:181px;font-size:12.2px;font-family:'Liberation Mono', monospace;letter-spacing:-0.32px;color:#141414;-webkit-text-stroke:0.15px currentColor;">FF</div>
<div class="t" style="left:523.63px;top:181px;font-size:12.2px;font-family:'Liberation Mono', monospace;letter-spacing:-0.32px;color:#141414;-webkit-text-stroke:0.15px currentColor;">FF</div>
<div class="t" style="left:542.96px;top:181px;font-size:12.2px;font-family:'Liberation Mono', monospace;letter-spacing:-0.32px;color:#141414;-webkit-text-stroke:0.15px currentColor;">FF</div>
<div class="t" style="left:562.29px;top:181px;font-size:12.2px;font-family:'Liberation Mono', monospace;letter-spacing:-0.32px;color:#141414;-webkit-text-stroke:0.15px currentColor;">FF</div>
<div class="t" style="left:581.62px;top:181px;font-size:12.2px;font-family:'Liberation Mono', monospace;letter-spacing:-0.32px;color:#141414;-webkit-text-stroke:0.15px currentColor;">FF</div>
<div class="t" style="left:600.95px;top:181px;font-size:12.2px;font-family:'Liberation Mono', monospace;letter-spacing:-0.32px;color:#141414;-webkit-text-stroke:0.15px currentColor;">FF</div>
<div class="r" style="left:632px;top:188px;width:2px;height:2px;background:#3a3a3a;"></div>
<div class="r" style="left:646px;top:188px;width:2px;height:2px;background:#3a3a3a;"></div>
<div class="r" style="left:660px;top:188px;width:2px;height:2px;background:#3a3a3a;"></div>
<div class="r" style="left:674px;top:188px;width:2px;height:2px;background:#3a3a3a;"></div>
<div class="r" style="left:688px;top:188px;width:2px;height:2px;background:#3a3a3a;"></div>
<div class="r" style="left:702px;top:188px;width:2px;height:2px;background:#3a3a3a;"></div>
<div class="r" style="left:716px;top:188px;width:2px;height:2px;background:#3a3a3a;"></div>
<div class="r" style="left:730px;top:188px;width:2px;height:2px;background:#3a3a3a;"></div>
<div class="r" style="left:745px;top:188px;width:2px;height:2px;background:#3a3a3a;"></div>
<div class="r" style="left:759px;top:188px;width:2px;height:2px;background:#3a3a3a;"></div>
<div class="r" style="left:773px;top:188px;width:2px;height:2px;background:#3a3a3a;"></div>
<div class="r" style="left:787px;top:188px;width:2px;height:2px;background:#3a3a3a;"></div>
<div class="r" style="left:801px;top:188px;width:2px;height:2px;background:#3a3a3a;"></div>
<div class="r" style="left:815px;top:188px;width:2px;height:2px;background:#3a3a3a;"></div>
<div class="r" style="left:829px;top:188px;width:2px;height:2px;background:#3a3a3a;"></div>
<div class="r" style="left:843px;top:188px;width:2px;height:2px;background:#3a3a3a;"></div>
<div class="t" style="left:246.55px;top:195px;font-size:12.2px;font-family:'Liberation Mono', monospace;letter-spacing:-0.32px;color:#141414;-webkit-text-stroke:0.15px currentColor;">00000030</div>
<div class="t" style="left:311.00px;top:195px;font-size:12.2px;font-family:'Liberation Mono', monospace;letter-spacing:-0.32px;color:#141414;-webkit-text-stroke:0.15px currentColor;">FF</div>
<div class="t" style="left:330.33px;top:195px;font-size:12.2px;font-family:'Liberation Mono', monospace;letter-spacing:-0.32px;color:#141414;-webkit-text-stroke:0.15px currentColor;">FF</div>
<div class="t" style="left:349.66px;top:195px;font-size:12.2px;font-family:'Liberation Mono', monospace;letter-spacing:-0.32px;color:#141414;-webkit-text-stroke:0.15px currentColor;">FF</div>
<div class="t" style="left:368.99px;top:195px;font-size:12.2px;font-family:'Liberation Mono', monospace;letter-spacing:-0.32px;color:#141414;-webkit-text-stroke:0.15px currentColor;">FF</div>
<div class="t" style="left:388.32px;top:195px;font-size:12.2px;font-family:'Liberation Mono', monospace;letter-spacing:-0.32px;color:#141414;-webkit-text-stroke:0.15px currentColor;">FF</div>
<div class="t" style="left:407.65px;top:195px;font-size:12.2px;font-family:'Liberation Mono', monospace;letter-spacing:-0.32px;color:#141414;-webkit-text-stroke:0.15px currentColor;">FF</div>
<div class="t" style="left:426.98px;top:195px;font-size:12.2px;font-family:'Liberation Mono', monospace;letter-spacing:-0.32px;color:#141414;-webkit-text-stroke:0.15px currentColor;">FF</div>
<div class="t" style="left:446.31px;top:195px;font-size:12.2px;font-family:'Liberation Mono', monospace;letter-spacing:-0.32px;color:#141414;-webkit-text-stroke:0.15px currentColor;">FF</div>
<div class="t" style="left:465.64px;top:195px;font-size:12.2px;font-family:'Liberation Mono', monospace;letter-spacing:-0.32px;color:#141414;-webkit-text-stroke:0.15px currentColor;">FF</div>
<div class="t" style="left:484.97px;top:195px;font-size:12.2px;font-family:'Liberation Mono', monospace;letter-spacing:-0.32px;color:#141414;-webkit-text-stroke:0.15px currentColor;">FF</div>
<div class="t" style="left:504.30px;top:195px;font-size:12.2px;font-family:'Liberation Mono', monospace;letter-spacing:-0.32px;color:#141414;-webkit-text-stroke:0.15px currentColor;">FF</div>
<div class="t" style="left:523.63px;top:195px;font-size:12.2px;font-family:'Liberation Mono', monospace;letter-spacing:-0.32px;color:#141414;-webkit-text-stroke:0.15px currentColor;">FF</div>
<div class="t" style="left:542.96px;top:195px;font-size:12.2px;font-family:'Liberation Mono', monospace;letter-spacing:-0.32px;color:#141414;-webkit-text-stroke:0.15px currentColor;">FF</div>
<div class="t" style="left:562.29px;top:195px;font-size:12.2px;font-family:'Liberation Mono', monospace;letter-spacing:-0.32px;color:#141414;-webkit-text-stroke:0.15px currentColor;">FF</div>
<div class="t" style="left:581.62px;top:195px;font-size:12.2px;font-family:'Liberation Mono', monospace;letter-spacing:-0.32px;color:#141414;-webkit-text-stroke:0.15px currentColor;">FF</div>
<div class="t" style="left:600.95px;top:195px;font-size:12.2px;font-family:'Liberation Mono', monospace;letter-spacing:-0.32px;color:#141414;-webkit-text-stroke:0.15px currentColor;">FF</div>
<div class="r" style="left:632px;top:202px;width:2px;height:2px;background:#3a3a3a;"></div>
<div class="r" style="left:646px;top:202px;width:2px;height:2px;background:#3a3a3a;"></div>
<div class="r" style="left:660px;top:202px;width:2px;height:2px;background:#3a3a3a;"></div>
<div class="r" style="left:674px;top:202px;width:2px;height:2px;background:#3a3a3a;"></div>
<div class="r" style="left:688px;top:202px;width:2px;height:2px;background:#3a3a3a;"></div>
<div class="r" style="left:702px;top:202px;width:2px;height:2px;background:#3a3a3a;"></div>
<div class="r" style="left:716px;top:202px;width:2px;height:2px;background:#3a3a3a;"></div>
<div class="r" style="left:730px;top:202px;width:2px;height:2px;background:#3a3a3a;"></div>
<div class="r" style="left:745px;top:202px;width:2px;height:2px;background:#3a3a3a;"></div>
<div class="r" style="left:759px;top:202px;width:2px;height:2px;background:#3a3a3a;"></div>
<div class="r" style="left:773px;top:202px;width:2px;height:2px;background:#3a3a3a;"></div>
<div class="r" style="left:787px;top:202px;width:2px;height:2px;background:#3a3a3a;"></div>
<div class="r" style="left:801px;top:202px;width:2px;height:2px;background:#3a3a3a;"></div>
<div class="r" style="left:815px;top:202px;width:2px;height:2px;background:#3a3a3a;"></div>
<div class="r" style="left:829px;top:202px;width:2px;height:2px;background:#3a3a3a;"></div>
<div class="r" style="left:843px;top:202px;width:2px;height:2px;background:#3a3a3a;"></div>
<div class="t" style="left:246.55px;top:209px;font-size:12.2px;font-family:'Liberation Mono', monospace;letter-spacing:-0.32px;color:#141414;-webkit-text-stroke:0.15px currentColor;">00000040</div>
<div class="t" style="left:311.00px;top:209px;font-size:12.2px;font-family:'Liberation Mono', monospace;letter-spacing:-0.32px;color:#141414;-webkit-text-stroke:0.15px currentColor;">FF</div>
<div class="t" style="left:330.33px;top:209px;font-size:12.2px;font-family:'Liberation Mono', monospace;letter-spacing:-0.32px;color:#141414;-webkit-text-stroke:0.15px currentColor;">FF</div>
<div class="t" style="left:349.66px;top:209px;font-size:12.2px;font-family:'Liberation Mono', monospace;letter-spacing:-0.32px;color:#141414;-webkit-text-stroke:0.15px currentColor;">FF</div>
<div class="t" style="left:368.99px;top:209px;font-size:12.2px;font-family:'Liberation Mono', monospace;letter-spacing:-0.32px;color:#141414;-webkit-text-stroke:0.15px currentColor;">FF</div>
<div class="t" style="left:388.32px;top:209px;font-size:12.2px;font-family:'Liberation Mono', monospace;letter-spacing:-0.32px;color:#141414;-webkit-text-stroke:0.15px currentColor;">FF</div>
<div class="t" style="left:407.65px;top:209px;font-size:12.2px;font-family:'Liberation Mono', monospace;letter-spacing:-0.32px;color:#141414;-webkit-text-stroke:0.15px currentColor;">FF</div>
<div class="t" style="left:426.98px;top:209px;font-size:12.2px;font-family:'Liberation Mono', monospace;letter-spacing:-0.32px;color:#141414;-webkit-text-stroke:0.15px currentColor;">FF</div>
<div class="t" style="left:446.31px;top:209px;font-size:12.2px;font-family:'Liberation Mono', monospace;letter-spacing:-0.32px;color:#141414;-webkit-text-stroke:0.15px currentColor;">FF</div>
<div class="t" style="left:465.64px;top:209px;font-size:12.2px;font-family:'Liberation Mono', monospace;letter-spacing:-0.32px;color:#141414;-webkit-text-stroke:0.15px currentColor;">FF</div>
<div class="t" style="left:484.97px;top:209px;font-size:12.2px;font-family:'Liberation Mono', monospace;letter-spacing:-0.32px;color:#141414;-webkit-text-stroke:0.15px currentColor;">FF</div>
<div class="t" style="left:504.30px;top:209px;font-size:12.2px;font-family:'Liberation Mono', monospace;letter-spacing:-0.32px;color:#141414;-webkit-text-stroke:0.15px currentColor;">FF</div>
<div class="t" style="left:523.63px;top:209px;font-size:12.2px;font-family:'Liberation Mono', monospace;letter-spacing:-0.32px;color:#141414;-webkit-text-stroke:0.15px currentColor;">FF</div>
<div class="t" style="left:542.96px;top:209px;font-size:12.2px;font-family:'Liberation Mono', monospace;letter-spacing:-0.32px;color:#141414;-webkit-text-stroke:0.15px currentColor;">FF</div>
<div class="t" style="left:562.29px;top:209px;font-size:12.2px;font-family:'Liberation Mono', monospace;letter-spacing:-0.32px;color:#141414;-webkit-text-stroke:0.15px currentColor;">FF</div>
<div class="t" style="left:581.62px;top:209px;font-size:12.2px;font-family:'Liberation Mono', monospace;letter-spacing:-0.32px;color:#141414;-webkit-text-stroke:0.15px currentColor;">FF</div>
<div class="t" style="left:600.95px;top:209px;font-size:12.2px;font-family:'Liberation Mono', monospace;letter-spacing:-0.32px;color:#141414;-webkit-text-stroke:0.15px currentColor;">FF</div>
<div class="r" style="left:632px;top:216px;width:2px;height:2px;background:#3a3a3a;"></div>
<div class="r" style="left:646px;top:216px;width:2px;height:2px;background:#3a3a3a;"></div>
<div class="r" style="left:660px;top:216px;width:2px;height:2px;background:#3a3a3a;"></div>
<div class="r" style="left:674px;top:216px;width:2px;height:2px;background:#3a3a3a;"></div>
<div class="r" style="left:688px;top:216px;width:2px;height:2px;background:#3a3a3a;"></div>
<div class="r" style="left:702px;top:216px;width:2px;height:2px;background:#3a3a3a;"></div>
<div class="r" style="left:716px;top:216px;width:2px;height:2px;background:#3a3a3a;"></div>
<div class="r" style="left:730px;top:216px;width:2px;height:2px;background:#3a3a3a;"></div>
<div class="r" style="left:745px;top:216px;width:2px;height:2px;background:#3a3a3a;"></div>
<div class="r" style="left:759px;top:216px;width:2px;height:2px;background:#3a3a3a;"></div>
<div class="r" style="left:773px;top:216px;width:2px;height:2px;background:#3a3a3a;"></div>
<div class="r" style="left:787px;top:216px;width:2px;height:2px;background:#3a3a3a;"></div>
<div class="r" style="left:801px;top:216px;width:2px;height:2px;background:#3a3a3a;"></div>
<div class="r" style="left:815px;top:216px;width:2px;height:2px;background:#3a3a3a;"></div>
<div class="r" style="left:829px;top:216px;width:2px;height:2px;background:#3a3a3a;"></div>
<div class="r" style="left:843px;top:216px;width:2px;height:2px;background:#3a3a3a;"></div>
<div class="t" style="left:246.55px;top:223px;font-size:12.2px;font-family:'Liberation Mono', monospace;letter-spacing:-0.32px;color:#141414;-webkit-text-stroke:0.15px currentColor;">00000050</div>
<div class="t" style="left:311.00px;top:223px;font-size:12.2px;font-family:'Liberation Mono', monospace;letter-spacing:-0.32px;color:#141414;-webkit-text-stroke:0.15px currentColor;">FF</div>
<div class="t" style="left:330.33px;top:223px;font-size:12.2px;font-family:'Liberation Mono', monospace;letter-spacing:-0.32px;color:#141414;-webkit-text-stroke:0.15px currentColor;">FF</div>
<div class="t" style="left:349.66px;top:223px;font-size:12.2px;font-family:'Liberation Mono', monospace;letter-spacing:-0.32px;color:#141414;-webkit-text-stroke:0.15px currentColor;">FF</div>
<div class="t" style="left:368.99px;top:223px;font-size:12.2px;font-family:'Liberation Mono', monospace;letter-spacing:-0.32px;color:#141414;-webkit-text-stroke:0.15px currentColor;">FF</div>
<div class="t" style="left:388.32px;top:223px;font-size:12.2px;font-family:'Liberation Mono', monospace;letter-spacing:-0.32px;color:#141414;-webkit-text-stroke:0.15px currentColor;">FF</div>
<div class="t" style="left:407.65px;top:223px;font-size:12.2px;font-family:'Liberation Mono', monospace;letter-spacing:-0.32px;color:#141414;-webkit-text-stroke:0.15px currentColor;">FF</div>
<div class="t" style="left:426.98px;top:223px;font-size:12.2px;font-family:'Liberation Mono', monospace;letter-spacing:-0.32px;color:#141414;-webkit-text-stroke:0.15px currentColor;">FF</div>
<div class="t" style="left:446.31px;top:223px;font-size:12.2px;font-family:'Liberation Mono', monospace;letter-spacing:-0.32px;color:#141414;-webkit-text-stroke:0.15px currentColor;">FF</div>
<div class="t" style="left:465.64px;top:223px;font-size:12.2px;font-family:'Liberation Mono', monospace;letter-spacing:-0.32px;color:#141414;-webkit-text-stroke:0.15px currentColor;">FF</div>
<div class="t" style="left:484.97px;top:223px;font-size:12.2px;font-family:'Liberation Mono', monospace;letter-spacing:-0.32px;color:#141414;-webkit-text-stroke:0.15px currentColor;">FF</div>
<div class="t" style="left:504.30px;top:223px;font-size:12.2px;font-family:'Liberation Mono', monospace;letter-spacing:-0.32px;color:#141414;-webkit-text-stroke:0.15px currentColor;">FF</div>
<div class="t" style="left:523.63px;top:223px;font-size:12.2px;font-family:'Liberation Mono', monospace;letter-spacing:-0.32px;color:#141414;-webkit-text-stroke:0.15px currentColor;">FF</div>
<div class="t" style="left:542.96px;top:223px;font-size:12.2px;font-family:'Liberation Mono', monospace;letter-spacing:-0.32px;color:#141414;-webkit-text-stroke:0.15px currentColor;">FF</div>
<div class="t" style="left:562.29px;top:223px;font-size:12.2px;font-family:'Liberation Mono', monospace;letter-spacing:-0.32px;color:#141414;-webkit-text-stroke:0.15px currentColor;">FF</div>
<div class="t" style="left:581.62px;top:223px;font-size:12.2px;font-family:'Liberation Mono', monospace;letter-spacing:-0.32px;color:#141414;-webkit-text-stroke:0.15px currentColor;">FF</div>
<div class="t" style="left:600.95px;top:223px;font-size:12.2px;font-family:'Liberation Mono', monospace;letter-spacing:-0.32px;color:#141414;-webkit-text-stroke:0.15px currentColor;">FF</div>
<div class="r" style="left:632px;top:230px;width:2px;height:2px;background:#3a3a3a;"></div>
<div class="r" style="left:646px;top:230px;width:2px;height:2px;background:#3a3a3a;"></div>
<div class="r" style="left:660px;top:230px;width:2px;height:2px;background:#3a3a3a;"></div>
<div class="r" style="left:674px;top:230px;width:2px;height:2px;background:#3a3a3a;"></div>
<div class="r" style="left:688px;top:230px;width:2px;height:2px;background:#3a3a3a;"></div>
<div class="r" style="left:702px;top:230px;width:2px;height:2px;background:#3a3a3a;"></div>
<div class="r" style="left:716px;top:230px;width:2px;height:2px;background:#3a3a3a;"></div>
<div class="r" style="left:730px;top:230px;width:2px;height:2px;background:#3a3a3a;"></div>
<div class="r" style="left:745px;top:230px;width:2px;height:2px;background:#3a3a3a;"></div>
<div class="r" style="left:759px;top:230px;width:2px;height:2px;background:#3a3a3a;"></div>
<div class="r" style="left:773px;top:230px;width:2px;height:2px;background:#3a3a3a;"></div>
<div class="r" style="left:787px;top:230px;width:2px;height:2px;background:#3a3a3a;"></div>
<div class="r" style="left:801px;top:230px;width:2px;height:2px;background:#3a3a3a;"></div>
<div class="r" style="left:815px;top:230px;width:2px;height:2px;background:#3a3a3a;"></div>
<div class="r" style="left:829px;top:230px;width:2px;height:2px;background:#3a3a3a;"></div>
<div class="r" style="left:843px;top:230px;width:2px;height:2px;background:#3a3a3a;"></div>
<div class="t" style="left:246.55px;top:237px;font-size:12.2px;font-family:'Liberation Mono', monospace;letter-spacing:-0.32px;color:#141414;-webkit-text-stroke:0.15px currentColor;">00000060</div>
<div class="t" style="left:311.00px;top:237px;font-size:12.2px;font-family:'Liberation Mono', monospace;letter-spacing:-0.32px;color:#141414;-webkit-text-stroke:0.15px currentColor;">FF</div>
<div class="t" style="left:330.33px;top:237px;font-size:12.2px;font-family:'Liberation Mono', monospace;letter-spacing:-0.32px;color:#141414;-webkit-text-stroke:0.15px currentColor;">FF</div>
<div class="t" style="left:349.66px;top:237px;font-size:12.2px;font-family:'Liberation Mono', monospace;letter-spacing:-0.32px;color:#141414;-webkit-text-stroke:0.15px currentColor;">FF</div>
<div class="t" style="left:368.99px;top:237px;font-size:12.2px;font-family:'Liberation Mono', monospace;letter-spacing:-0.32px;color:#141414;-webkit-text-stroke:0.15px currentColor;">FF</div>
<div class="t" style="left:388.32px;top:237px;font-size:12.2px;font-family:'Liberation Mono', monospace;letter-spacing:-0.32px;color:#141414;-webkit-text-stroke:0.15px currentColor;">FF</div>
<div class="t" style="left:407.65px;top:237px;font-size:12.2px;font-family:'Liberation Mono', monospace;letter-spacing:-0.32px;color:#141414;-webkit-text-stroke:0.15px currentColor;">FF</div>
<div class="t" style="left:426.98px;top:237px;font-size:12.2px;font-family:'Liberation Mono', monospace;letter-spacing:-0.32px;color:#141414;-webkit-text-stroke:0.15px currentColor;">FF</div>
<div class="t" style="left:446.31px;top:237px;font-size:12.2px;font-family:'Liberation Mono', monospace;letter-spacing:-0.32px;color:#141414;-webkit-text-stroke:0.15px currentColor;">FF</div>
<div class="t" style="left:465.64px;top:237px;font-size:12.2px;font-family:'Liberation Mono', monospace;letter-spacing:-0.32px;color:#141414;-webkit-text-stroke:0.15px currentColor;">FF</div>
<div class="t" style="left:484.97px;top:237px;font-size:12.2px;font-family:'Liberation Mono', monospace;letter-spacing:-0.32px;color:#141414;-webkit-text-stroke:0.15px currentColor;">FF</div>
<div class="t" style="left:504.30px;top:237px;font-size:12.2px;font-family:'Liberation Mono', monospace;letter-spacing:-0.32px;color:#141414;-webkit-text-stroke:0.15px currentColor;">FF</div>
<div class="t" style="left:523.63px;top:237px;font-size:12.2px;font-family:'Liberation Mono', monospace;letter-spacing:-0.32px;color:#141414;-webkit-text-stroke:0.15px currentColor;">FF</div>
<div class="t" style="left:542.96px;top:237px;font-size:12.2px;font-family:'Liberation Mono', monospace;letter-spacing:-0.32px;color:#141414;-webkit-text-stroke:0.15px currentColor;">FF</div>
<div class="t" style="left:562.29px;top:237px;font-size:12.2px;font-family:'Liberation Mono', monospace;letter-spacing:-0.32px;color:#141414;-webkit-text-stroke:0.15px currentColor;">FF</div>
<div class="t" style="left:581.62px;top:237px;font-size:12.2px;font-family:'Liberation Mono', monospace;letter-spacing:-0.32px;color:#141414;-webkit-text-stroke:0.15px currentColor;">FF</div>
<div class="t" style="left:600.95px;top:237px;font-size:12.2px;font-family:'Liberation Mono', monospace;letter-spacing:-0.32px;color:#141414;-webkit-text-stroke:0.15px currentColor;">FF</div>
<div class="r" style="left:632px;top:244px;width:2px;height:2px;background:#3a3a3a;"></div>
<div class="r" style="left:646px;top:244px;width:2px;height:2px;background:#3a3a3a;"></div>
<div class="r" style="left:660px;top:244px;width:2px;height:2px;background:#3a3a3a;"></div>
<div class="r" style="left:674px;top:244px;width:2px;height:2px;background:#3a3a3a;"></div>
<div class="r" style="left:688px;top:244px;width:2px;height:2px;background:#3a3a3a;"></div>
<div class="r" style="left:702px;top:244px;width:2px;height:2px;background:#3a3a3a;"></div>
<div class="r" style="left:716px;top:244px;width:2px;height:2px;background:#3a3a3a;"></div>
<div class="r" style="left:730px;top:244px;width:2px;height:2px;background:#3a3a3a;"></div>
<div class="r" style="left:745px;top:244px;width:2px;height:2px;background:#3a3a3a;"></div>
<div class="r" style="left:759px;top:244px;width:2px;height:2px;background:#3a3a3a;"></div>
<div class="r" style="left:773px;top:244px;width:2px;height:2px;background:#3a3a3a;"></div>
<div class="r" style="left:787px;top:244px;width:2px;height:2px;background:#3a3a3a;"></div>
<div class="r" style="left:801px;top:244px;width:2px;height:2px;background:#3a3a3a;"></div>
<div class="r" style="left:815px;top:244px;width:2px;height:2px;background:#3a3a3a;"></div>
<div class="r" style="left:829px;top:244px;width:2px;height:2px;background:#3a3a3a;"></div>
<div class="r" style="left:843px;top:244px;width:2px;height:2px;background:#3a3a3a;"></div>
<div class="t" style="left:246.55px;top:251px;font-size:12.2px;font-family:'Liberation Mono', monospace;letter-spacing:-0.32px;color:#141414;-webkit-text-stroke:0.15px currentColor;">00000070</div>
<div class="t" style="left:311.00px;top:251px;font-size:12.2px;font-family:'Liberation Mono', monospace;letter-spacing:-0.32px;color:#141414;-webkit-text-stroke:0.15px currentColor;">FF</div>
<div class="t" style="left:330.33px;top:251px;font-size:12.2px;font-family:'Liberation Mono', monospace;letter-spacing:-0.32px;color:#141414;-webkit-text-stroke:0.15px currentColor;">FF</div>
<div class="t" style="left:349.66px;top:251px;font-size:12.2px;font-family:'Liberation Mono', monospace;letter-spacing:-0.32px;color:#141414;-webkit-text-stroke:0.15px currentColor;">FF</div>
<div class="t" style="left:368.99px;top:251px;font-size:12.2px;font-family:'Liberation Mono', monospace;letter-spacing:-0.32px;color:#141414;-webkit-text-stroke:0.15px currentColor;">FF</div>
<div class="t" style="left:388.32px;top:251px;font-size:12.2px;font-family:'Liberation Mono', monospace;letter-spacing:-0.32px;color:#141414;-webkit-text-stroke:0.15px currentColor;">FF</div>
<div class="t" style="left:407.65px;top:251px;font-size:12.2px;font-family:'Liberation Mono', monospace;letter-spacing:-0.32px;color:#141414;-webkit-text-stroke:0.15px currentColor;">FF</div>
<div class="t" style="left:426.98px;top:251px;font-size:12.2px;font-family:'Liberation Mono', monospace;letter-spacing:-0.32px;color:#141414;-webkit-text-stroke:0.15px currentColor;">FF</div>
<div class="t" style="left:446.31px;top:251px;font-size:12.2px;font-family:'Liberation Mono', monospace;letter-spacing:-0.32px;color:#141414;-webkit-text-stroke:0.15px currentColor;">FF</div>
<div class="t" style="left:465.64px;top:251px;font-size:12.2px;font-family:'Liberation Mono', monospace;letter-spacing:-0.32px;color:#141414;-webkit-text-stroke:0.15px currentColor;">FF</div>
<div class="t" style="left:484.97px;top:251px;font-size:12.2px;font-family:'Liberation Mono', monospace;letter-spacing:-0.32px;color:#141414;-webkit-text-stroke:0.15px currentColor;">FF</div>
<div class="t" style="left:504.30px;top:251px;font-size:12.2px;font-family:'Liberation Mono', monospace;letter-spacing:-0.32px;color:#141414;-webkit-text-stroke:0.15px currentColor;">FF</div>
<div class="t" style="left:523.63px;top:251px;font-size:12.2px;font-family:'Liberation Mono', monospace;letter-spacing:-0.32px;color:#141414;-webkit-text-stroke:0.15px currentColor;">FF</div>
<div class="t" style="left:542.96px;top:251px;font-size:12.2px;font-family:'Liberation Mono', monospace;letter-spacing:-0.32px;color:#141414;-webkit-text-stroke:0.15px currentColor;">FF</div>
<div class="t" style="left:562.29px;top:251px;font-size:12.2px;font-family:'Liberation Mono', monospace;letter-spacing:-0.32px;color:#141414;-webkit-text-stroke:0.15px currentColor;">FF</div>
<div class="t" style="left:581.62px;top:251px;font-size:12.2px;font-family:'Liberation Mono', monospace;letter-spacing:-0.32px;color:#141414;-webkit-text-stroke:0.15px currentColor;">FF</div>
<div class="t" style="left:600.95px;top:251px;font-size:12.2px;font-family:'Liberation Mono', monospace;letter-spacing:-0.32px;color:#141414;-webkit-text-stroke:0.15px currentColor;">FF</div>
<div class="r" style="left:632px;top:258px;width:2px;height:2px;background:#3a3a3a;"></div>
<div class="r" style="left:646px;top:258px;width:2px;height:2px;background:#3a3a3a;"></div>
<div class="r" style="left:660px;top:258px;width:2px;height:2px;background:#3a3a3a;"></div>
<div class="r" style="left:674px;top:258px;width:2px;height:2px;background:#3a3a3a;"></div>
<div class="r" style="left:688px;top:258px;width:2px;height:2px;background:#3a3a3a;"></div>
<div class="r" style="left:702px;top:258px;width:2px;height:2px;background:#3a3a3a;"></div>
<div class="r" style="left:716px;top:258px;width:2px;height:2px;background:#3a3a3a;"></div>
<div class="r" style="left:730px;top:258px;width:2px;height:2px;background:#3a3a3a;"></div>
<div class="r" style="left:745px;top:258px;width:2px;height:2px;background:#3a3a3a;"></div>
<div class="r" style="left:759px;top:258px;width:2px;height:2px;background:#3a3a3a;"></div>
<div class="r" style="left:773px;top:258px;width:2px;height:2px;background:#3a3a3a;"></div>
<div class="r" style="left:787px;top:258px;width:2px;height:2px;background:#3a3a3a;"></div>
<div class="r" style="left:801px;top:258px;width:2px;height:2px;background:#3a3a3a;"></div>
<div class="r" style="left:815px;top:258px;width:2px;height:2px;background:#3a3a3a;"></div>
<div class="r" style="left:829px;top:258px;width:2px;height:2px;background:#3a3a3a;"></div>
<div class="r" style="left:843px;top:258px;width:2px;height:2px;background:#3a3a3a;"></div>
<div class="t" style="left:629.25px;top:139px;font-size:12.2px;font-family:'Liberation Mono', monospace;letter-spacing:-0.32px;color:#2a2ab4;-webkit-text-stroke:0.15px currentColor;">0</div>
<div class="t" style="left:643.32px;top:139px;font-size:12.2px;font-family:'Liberation Mono', monospace;letter-spacing:-0.32px;color:#2a2ab4;-webkit-text-stroke:0.15px currentColor;">1</div>
<div class="t" style="left:657.39px;top:139px;font-size:12.2px;font-family:'Liberation Mono', monospace;letter-spacing:-0.32px;color:#2a2ab4;-webkit-text-stroke:0.15px currentColor;">2</div>
<div class="t" style="left:671.46px;top:139px;font-size:12.2px;font-family:'Liberation Mono', monospace;letter-spacing:-0.32px;color:#2a2ab4;-webkit-text-stroke:0.15px currentColor;">3</div>
<div class="t" style="left:685.53px;top:139px;font-size:12.2px;font-family:'Liberation Mono', monospace;letter-spacing:-0.32px;color:#2a2ab4;-webkit-text-stroke:0.15px currentColor;">4</div>
<div class="t" style="left:699.60px;top:139px;font-size:12.2px;font-family:'Liberation Mono', monospace;letter-spacing:-0.32px;color:#2a2ab4;-webkit-text-stroke:0.15px currentColor;">5</div>
<div class="t" style="left:713.67px;top:139px;font-size:12.2px;font-family:'Liberation Mono', monospace;letter-spacing:-0.32px;color:#2a2ab4;-webkit-text-stroke:0.15px currentColor;">6</div>
<div class="t" style="left:727.74px;top:139px;font-size:12.2px;font-family:'Liberation Mono', monospace;letter-spacing:-0.32px;color:#2a2ab4;-webkit-text-stroke:0.15px currentColor;">7</div>
<div class="t" style="left:741.81px;top:139px;font-size:12.2px;font-family:'Liberation Mono', monospace;letter-spacing:-0.32px;color:#2a2ab4;-webkit-text-stroke:0.15px currentColor;">8</div>
<div class="t" style="left:755.88px;top:139px;font-size:12.2px;font-family:'Liberation Mono', monospace;letter-spacing:-0.32px;color:#2a2ab4;-webkit-text-stroke:0.15px currentColor;">9</div>
<div class="t" style="left:769.95px;top:139px;font-size:12.2px;font-family:'Liberation Mono', monospace;letter-spacing:-0.32px;color:#2a2ab4;-webkit-text-stroke:0.15px currentColor;">A</div>
<div class="t" style="left:784.02px;top:139px;font-size:12.2px;font-family:'Liberation Mono', monospace;letter-spacing:-0.32px;color:#2a2ab4;-webkit-text-stroke:0.15px currentColor;">B</div>
<div class="t" style="left:798.09px;top:139px;font-size:12.2px;font-family:'Liberation Mono', monospace;letter-spacing:-0.32px;color:#2a2ab4;-webkit-text-stroke:0.15px currentColor;">C</div>
<div class="t" style="left:812.16px;top:139px;font-size:12.2px;font-family:'Liberation Mono', monospace;letter-spacing:-0.32px;color:#2a2ab4;-webkit-text-stroke:0.15px currentColor;">D</div>
<div class="t" style="left:826.23px;top:139px;font-size:12.2px;font-family:'Liberation Mono', monospace;letter-spacing:-0.32px;color:#2a2ab4;-webkit-text-stroke:0.15px currentColor;">E</div>
<div class="t" style="left:840.30px;top:139px;font-size:12.2px;font-family:'Liberation Mono', monospace;letter-spacing:-0.32px;color:#2a2ab4;-webkit-text-stroke:0.15px currentColor;">F</div>
<div class="r" style="left:237px;top:441px;width:653px;height:107px;background:#e4e4e4;"></div>
<div class="r" style="left:239px;top:443px;width:650px;height:104px;background:#ffffff;"></div>
<div class="r" style="left:879px;top:444px;width:9px;height:101px;background:#ebebeb;"></div>
<div class="r" style="left:879px;top:518px;width:9px;height:17px;background:#c4c4c4;"></div>
<svg class="r" style="left:879px;top:444px" width="9" height="9"><path d="M1.5 7 L4.5 3 L7.5 7 Z" fill="#b6b6b6"/></svg>
<svg class="r" style="left:879px;top:536px" width="9" height="9"><path d="M1.5 3 L4.5 7 L7.5 3 Z" fill="#b6b6b6"/></svg>
<div class="t" style="left:239.74px;top:444.00px;font-size:11.60px;color:#3a24f0;font-family:'Liberation Sans', sans-serif;transform:scaleX(0.9379);-webkit-text-stroke:0.20px #3a24f0;">[17:35:19:704]</div>
<div class="t" style="left:239.74px;top:459.00px;font-size:11.60px;color:#1a1a1a;font-family:'Liberation Sans', sans-serif;transform:scaleX(0.9379);-webkit-text-stroke:0.20px #1a1a1a;">[17:35:23:321]</div>
<div class="t" style="left:239.74px;top:474.00px;font-size:11.60px;color:#3a24f0;font-family:'Liberation Sans', sans-serif;transform:scaleX(0.9379);-webkit-text-stroke:0.20px #3a24f0;">[17:35:23:328]</div>
<div class="t" style="left:239.74px;top:489.00px;font-size:11.60px;color:#1a1a1a;font-family:'Liberation Sans', sans-serif;transform:scaleX(0.9379);-webkit-text-stroke:0.20px #1a1a1a;">[17:35:27:265]</div>
<div class="t" style="left:239.74px;top:504.00px;font-size:11.60px;color:#1a1a1a;font-family:'Liberation Sans', sans-serif;transform:scaleX(0.9379);-webkit-text-stroke:0.20px #1a1a1a;">[17:35:33:702]</div>
<div class="t" style="left:239.74px;top:519.00px;font-size:11.60px;color:#1a1a1a;font-family:'Liberation Sans', sans-serif;transform:scaleX(0.9379);-webkit-text-stroke:0.20px #1a1a1a;">[17:35:36:927]</div>
<div class="t" style="left:316.15px;top:444.00px;font-size:11.60px;color:#3a24f0;font-family:'Liberation Sans', sans-serif;transform:scaleX(1.1000);-webkit-text-stroke:0.20px #3a24f0;">If</div>
<div class="t" style="left:329.84px;top:444.00px;font-size:11.60px;color:#3a24f0;font-family:'Liberation Sans', sans-serif;transform:scaleX(0.9852);-webkit-text-stroke:0.20px #3a24f0;">you</div>
<div class="t" style="left:354.01px;top:444.00px;font-size:11.60px;color:#3a24f0;font-family:'Liberation Sans', sans-serif;transform:scaleX(0.9094);-webkit-text-stroke:0.20px #3a24f0;">need</div>
<div class="t" style="left:384.32px;top:444.00px;font-size:11.60px;color:#3a24f0;font-family:'Liberation Sans', sans-serif;transform:scaleX(1.0389);-webkit-text-stroke:0.20px #3a24f0;">to</div>
<div class="t" style="left:400.88px;top:444.00px;font-size:11.60px;color:#3a24f0;font-family:'Liberation Sans', sans-serif;transform:scaleX(0.9051);-webkit-text-stroke:0.20px #3a24f0;">operate</div>
<div class="t" style="left:443.06px;top:444.00px;font-size:11.60px;color:#3a24f0;font-family:'Liberation Sans', sans-serif;transform:scaleX(0.9514);-webkit-text-stroke:0.20px #3a24f0;">other</div>
<div class="t" style="left:474.78px;top:444.00px;font-size:11.60px;color:#3a24f0;font-family:'Liberation Sans', sans-serif;transform:scaleX(0.9533);-webkit-text-stroke:0.20px #3a24f0;">memory</div>
<div class="t" style="left:521.53px;top:444.00px;font-size:11.60px;color:#3a24f0;font-family:'Liberation Sans', sans-serif;transform:scaleX(0.8068);-webkit-text-stroke:0.20px #3a24f0;">areas,</div>
<div class="t" style="left:554.23px;top:444.00px;font-size:11.60px;color:#3a24f0;font-family:'Liberation Sans', sans-serif;transform:scaleX(1.0179);-webkit-text-stroke:0.20px #3a24f0;">or</div>
<div class="t" style="left:571.57px;top:444.00px;font-size:11.60px;color:#3a24f0;font-family:'Liberation Sans', sans-serif;transform:scaleX(0.9263);-webkit-text-stroke:0.20px #3a24f0;">decryption,</div>
<div class="t" style="left:631.07px;top:444.00px;font-size:11.60px;color:#3a24f0;font-family:'Liberation Sans', sans-serif;transform:scaleX(0.9263);-webkit-text-stroke:0.20px #3a24f0;">encryption,</div>
<div class="t" style="left:690.44px;top:444.00px;font-size:11.60px;color:#3a24f0;font-family:'Liberation Sans', sans-serif;transform:scaleX(0.8788);-webkit-text-stroke:0.20px #3a24f0;">please</div>
<div class="t" style="left:726.64px;top:444.00px;font-size:11.60px;color:#3a24f0;font-family:'Liberation Sans', sans-serif;transform:scaleX(0.9876);-webkit-text-stroke:0.20px #3a24f0;">do</div>
<div class="t" style="left:745.37px;top:444.00px;font-size:11.60px;color:#3a24f0;font-family:'Liberation Sans', sans-serif;transform:scaleX(1.1000);-webkit-text-stroke:0.20px #3a24f0;">it</div>
<div class="t" style="left:758.77px;top:444.00px;font-size:11.60px;color:#3a24f0;font-family:'Liberation Sans', sans-serif;transform:scaleX(1.0960);-webkit-text-stroke:0.20px #3a24f0;">in</div>
<div class="t" style="left:775.44px;top:444.00px;font-size:11.60px;color:#3a24f0;font-family:'Liberation Sans', sans-serif;transform:scaleX(0.9334);-webkit-text-stroke:0.20px #3a24f0;">the</div>
<div class="t" style="left:796.75px;top:444.00px;font-size:11.60px;color:#3a24f0;font-family:'Liberation Sans', sans-serif;transform:scaleX(0.9476);-webkit-text-stroke:0.20px #3a24f0;">Chip</div>
<div class="t" style="left:825.75px;top:444.00px;font-size:11.60px;color:#3a24f0;font-family:'Liberation Sans', sans-serif;transform:scaleX(0.9669);-webkit-text-stroke:0.20px #3a24f0;">options!</div>
<div class="t" style="left:316.15px;top:474.00px;font-size:11.60px;color:#3a24f0;font-family:'Liberation Sans', sans-serif;transform:scaleX(1.1000);-webkit-text-stroke:0.20px #3a24f0;">If</div>
<div class="t" style="left:329.84px;top:474.00px;font-size:11.60px;color:#3a24f0;font-family:'Liberation Sans', sans-serif;transform:scaleX(0.9852);-webkit-text-stroke:0.20px #3a24f0;">you</div>
<div class="t" style="left:354.01px;top:474.00px;font-size:11.60px;color:#3a24f0;font-family:'Liberation Sans', sans-serif;transform:scaleX(0.9094);-webkit-text-stroke:0.20px #3a24f0;">need</div>
<div class="t" style="left:384.32px;top:474.00px;font-size:11.60px;color:#3a24f0;font-family:'Liberation Sans', sans-serif;transform:scaleX(1.0389);-webkit-text-stroke:0.20px #3a24f0;">to</div>
<div class="t" style="left:400.88px;top:474.00px;font-size:11.60px;color:#3a24f0;font-family:'Liberation Sans', sans-serif;transform:scaleX(0.9051);-webkit-text-stroke:0.20px #3a24f0;">operate</div>
<div class="t" style="left:443.06px;top:474.00px;font-size:11.60px;color:#3a24f0;font-family:'Liberation Sans', sans-serif;transform:scaleX(0.9514);-webkit-text-stroke:0.20px #3a24f0;">other</div>
<div class="t" style="left:474.78px;top:474.00px;font-size:11.60px;color:#3a24f0;font-family:'Liberation Sans', sans-serif;transform:scaleX(0.9533);-webkit-text-stroke:0.20px #3a24f0;">memory</div>
<div class="t" style="left:521.53px;top:474.00px;font-size:11.60px;color:#3a24f0;font-family:'Liberation Sans', sans-serif;transform:scaleX(0.8068);-webkit-text-stroke:0.20px #3a24f0;">areas,</div>
<div class="t" style="left:554.23px;top:474.00px;font-size:11.60px;color:#3a24f0;font-family:'Liberation Sans', sans-serif;transform:scaleX(1.0179);-webkit-text-stroke:0.20px #3a24f0;">or</div>
<div class="t" style="left:571.57px;top:474.00px;font-size:11.60px;color:#3a24f0;font-family:'Liberation Sans', sans-serif;transform:scaleX(0.9263);-webkit-text-stroke:0.20px #3a24f0;">decryption,</div>
<div class="t" style="left:631.07px;top:474.00px;font-size:11.60px;color:#3a24f0;font-family:'Liberation Sans', sans-serif;transform:scaleX(0.9263);-webkit-text-stroke:0.20px #3a24f0;">encryption,</div>
<div class="t" style="left:690.44px;top:474.00px;font-size:11.60px;color:#3a24f0;font-family:'Liberation Sans', sans-serif;transform:scaleX(0.8788);-webkit-text-stroke:0.20px #3a24f0;">please</div>
<div class="t" style="left:726.64px;top:474.00px;font-size:11.60px;color:#3a24f0;font-family:'Liberation Sans', sans-serif;transform:scaleX(0.9876);-webkit-text-stroke:0.20px #3a24f0;">do</div>
<div class="t" style="left:745.37px;top:474.00px;font-size:11.60px;color:#3a24f0;font-family:'Liberation Sans', sans-serif;transform:scaleX(1.1000);-webkit-text-stroke:0.20px #3a24f0;">it</div>
<div class="t" style="left:758.77px;top:474.00px;font-size:11.60px;color:#3a24f0;font-family:'Liberation Sans', sans-serif;transform:scaleX(1.0960);-webkit-text-stroke:0.20px #3a24f0;">in</div>
<div class="t" style="left:775.44px;top:474.00px;font-size:11.60px;color:#3a24f0;font-family:'Liberation Sans', sans-serif;transform:scaleX(0.9334);-webkit-text-stroke:0.20px #3a24f0;">the</div>
<div class="t" style="left:796.75px;top:474.00px;font-size:11.60px;color:#3a24f0;font-family:'Liberation Sans', sans-serif;transform:scaleX(0.9476);-webkit-text-stroke:0.20px #3a24f0;">Chip</div>
<div class="t" style="left:825.75px;top:474.00px;font-size:11.60px;color:#3a24f0;font-family:'Liberation Sans', sans-serif;transform:scaleX(0.9669);-webkit-text-stroke:0.20px #3a24f0;">options!</div>
<div class="t" style="left:316.48px;top:459.00px;font-size:11.60px;color:#1a1a1a;font-family:'Liberation Sans', sans-serif;transform:scaleX(0.8812);-webkit-text-stroke:0.20px #1a1a1a;">DFLASH:</div>
<div class="t" style="left:366.27px;top:459.00px;font-size:11.60px;color:#1a1a1a;font-family:'Liberation Sans', sans-serif;transform:scaleX(0.9355);-webkit-text-stroke:0.20px #1a1a1a;">32768</div>
<div class="t" style="left:403.32px;top:459.00px;font-size:11.60px;color:#1a1a1a;font-family:'Liberation Sans', sans-serif;transform:scaleX(0.9035);-webkit-text-stroke:0.20px #1a1a1a;">bytes</div>
<div class="t" style="left:316.83px;top:489.00px;font-size:11.60px;color:#1a1a1a;font-family:'Liberation Sans', sans-serif;transform:scaleX(0.8957);-webkit-text-stroke:0.20px #1a1a1a;">SHADOW:</div>
<div class="t" style="left:372.86px;top:489.00px;font-size:11.60px;color:#1a1a1a;font-family:'Liberation Sans', sans-serif;transform:scaleX(0.9387);-webkit-text-stroke:0.20px #1a1a1a;">32768</div>
<div class="t" style="left:410.02px;top:489.00px;font-size:11.60px;color:#1a1a1a;font-family:'Liberation Sans', sans-serif;transform:scaleX(0.9035);-webkit-text-stroke:0.20px #1a1a1a;">bytes</div>
<div class="t" style="left:316.53px;top:504.00px;font-size:11.60px;color:#1a1a1a;font-family:'Liberation Sans', sans-serif;transform:scaleX(0.8291);-webkit-text-stroke:0.20px #1a1a1a;">EEPROM:</div>
<div class="t" style="left:367.06px;top:504.00px;font-size:11.60px;color:#1a1a1a;font-family:'Liberation Sans', sans-serif;transform:scaleX(0.9515);-webkit-text-stroke:0.20px #1a1a1a;">32768</div>
<div class="t" style="left:403.82px;top:504.00px;font-size:11.60px;color:#1a1a1a;font-family:'Liberation Sans', sans-serif;transform:scaleX(0.9035);-webkit-text-stroke:0.20px #1a1a1a;">bytes</div>
<div class="t" style="left:316.53px;top:519.00px;font-size:11.60px;color:#1a1a1a;font-family:'Liberation Sans', sans-serif;transform:scaleX(0.8291);-webkit-text-stroke:0.20px #1a1a1a;">EEPROM:</div>
<div class="t" style="left:366.66px;top:519.00px;font-size:11.60px;color:#1a1a1a;font-family:'Liberation Sans', sans-serif;transform:scaleX(0.9622);-webkit-text-stroke:0.20px #1a1a1a;">128</div>
<div class="t" style="left:392.12px;top:519.00px;font-size:11.60px;color:#1a1a1a;font-family:'Liberation Sans', sans-serif;transform:scaleX(0.9035);-webkit-text-stroke:0.20px #1a1a1a;">bytes</div>
</body></html>
